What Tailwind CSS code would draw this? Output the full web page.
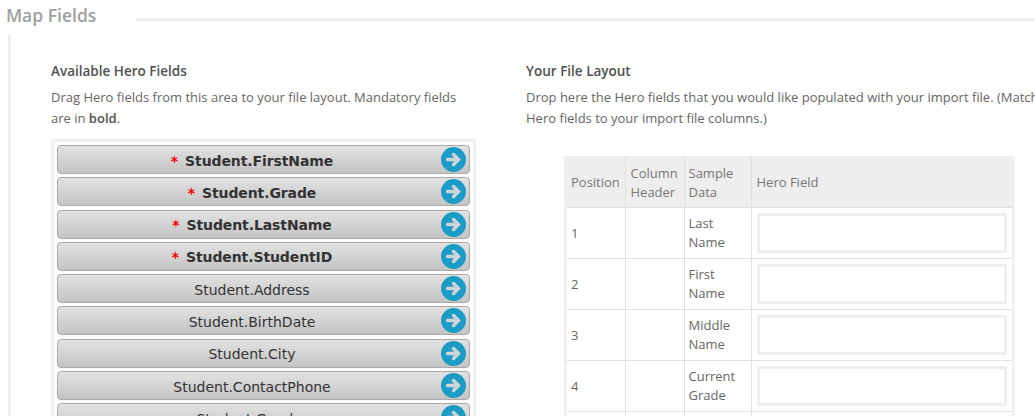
<!DOCTYPE html>
<html lang="en">
<head>
	<meta charset="UTF-8" />
	<title>Map Fields</title>
	<script src="https://cdn.jsdelivr.net/npm/@tailwindcss/browser@4"></script>
</head>
<body class="bg-white h-[416px] w-[1035px] overflow-hidden font-['Open_Sans',sans-serif] text-[13px] text-[#666]">
	<!-- Section title -->
	<div class="flex items-center h-[35px] pl-[6px]">
		<h2 class="text-[17.5px] font-semibold text-[#a0a0a0] leading-[32px] w-[130px] shrink-0 -mt-[5px]">Map Fields</h2>
		<div class="h-[3px] grow bg-[#eeeeee] mt-[4px]"></div>
	</div>

	<div class="ml-[8px] border-l-[3px] border-[#eeeeee] h-[381px] flex overflow-hidden">
		<!-- Available fields -->
		<div class="w-[515px] pl-[40px] pt-[26px] shrink-0">
			<h3 class="text-[13.5px] font-semibold text-[#505050] leading-[20px]">Available Hero Fields</h3>
			<p class="w-[420px] leading-[21px] mt-[6px]">Drag Hero fields from this area to your file layout. Mandatory fields are in <b class="font-semibold text-[#505050]">bold</b>.</p>
			<div class="mt-[10px] w-[425px] border-[3px] border-[#f1f1f1] px-[3px] pt-[3px] flex flex-col gap-[3.3px] font-['DejaVu_Sans',sans-serif] text-[14px] text-[#333]">
				<div class="relative h-[29px] pt-[3px] shrink-0 rounded-[4px] border border-[#aaaaaa] bg-gradient-to-b from-[#e2e2e2] to-[#c4c4c4] flex items-center justify-center pr-[23px] font-bold tracking-[-0.1px]"><span class="text-[#f00000] mr-[7px]">*</span>Student.FirstName
					<svg class="absolute right-[3px] top-[1px] w-[25px] h-[25px]" viewBox="0 0 25 25"><circle cx="12.5" cy="12.5" r="12.5" fill="#1a9cc6"/><path d="M6.5 12.5H17M12.5 7.5L17.5 12.5L12.5 17.5" fill="none" stroke="#cfd6da" stroke-width="3.4" stroke-linecap="round"/></svg>
				</div>
				<div class="relative h-[29px] pt-[3px] shrink-0 rounded-[4px] border border-[#aaaaaa] bg-gradient-to-b from-[#e2e2e2] to-[#c4c4c4] flex items-center justify-center pr-[23px] font-bold tracking-[-0.1px]"><span class="text-[#f00000] mr-[7px]">*</span>Student.Grade
					<svg class="absolute right-[3px] top-[1px] w-[25px] h-[25px]" viewBox="0 0 25 25"><circle cx="12.5" cy="12.5" r="12.5" fill="#1a9cc6"/><path d="M6.5 12.5H17M12.5 7.5L17.5 12.5L12.5 17.5" fill="none" stroke="#cfd6da" stroke-width="3.4" stroke-linecap="round"/></svg>
				</div>
				<div class="relative h-[29px] pt-[3px] shrink-0 rounded-[4px] border border-[#aaaaaa] bg-gradient-to-b from-[#e2e2e2] to-[#c4c4c4] flex items-center justify-center pr-[23px] font-bold tracking-[-0.1px]"><span class="text-[#f00000] mr-[7px]">*</span>Student.LastName
					<svg class="absolute right-[3px] top-[1px] w-[25px] h-[25px]" viewBox="0 0 25 25"><circle cx="12.5" cy="12.5" r="12.5" fill="#1a9cc6"/><path d="M6.5 12.5H17M12.5 7.5L17.5 12.5L12.5 17.5" fill="none" stroke="#cfd6da" stroke-width="3.4" stroke-linecap="round"/></svg>
				</div>
				<div class="relative h-[29px] pt-[3px] shrink-0 rounded-[4px] border border-[#aaaaaa] bg-gradient-to-b from-[#e2e2e2] to-[#c4c4c4] flex items-center justify-center pr-[23px] font-bold tracking-[-0.1px]"><span class="text-[#f00000] mr-[7px]">*</span>Student.StudentID
					<svg class="absolute right-[3px] top-[1px] w-[25px] h-[25px]" viewBox="0 0 25 25"><circle cx="12.5" cy="12.5" r="12.5" fill="#1a9cc6"/><path d="M6.5 12.5H17M12.5 7.5L17.5 12.5L12.5 17.5" fill="none" stroke="#cfd6da" stroke-width="3.4" stroke-linecap="round"/></svg>
				</div>
				<div class="relative h-[29px] pt-[3px] shrink-0 rounded-[4px] border border-[#aaaaaa] bg-gradient-to-b from-[#e2e2e2] to-[#c4c4c4] flex items-center justify-center pr-[23px]">Student.Address
					<svg class="absolute right-[3px] top-[1px] w-[25px] h-[25px]" viewBox="0 0 25 25"><circle cx="12.5" cy="12.5" r="12.5" fill="#1a9cc6"/><path d="M6.5 12.5H17M12.5 7.5L17.5 12.5L12.5 17.5" fill="none" stroke="#cfd6da" stroke-width="3.4" stroke-linecap="round"/></svg>
				</div>
				<div class="relative h-[29px] pt-[3px] shrink-0 rounded-[4px] border border-[#aaaaaa] bg-gradient-to-b from-[#e2e2e2] to-[#c4c4c4] flex items-center justify-center pr-[23px]">Student.BirthDate
					<svg class="absolute right-[3px] top-[1px] w-[25px] h-[25px]" viewBox="0 0 25 25"><circle cx="12.5" cy="12.5" r="12.5" fill="#1a9cc6"/><path d="M6.5 12.5H17M12.5 7.5L17.5 12.5L12.5 17.5" fill="none" stroke="#cfd6da" stroke-width="3.4" stroke-linecap="round"/></svg>
				</div>
				<div class="relative h-[29px] pt-[3px] shrink-0 rounded-[4px] border border-[#aaaaaa] bg-gradient-to-b from-[#e2e2e2] to-[#c4c4c4] flex items-center justify-center pr-[23px]">Student.City
					<svg class="absolute right-[3px] top-[1px] w-[25px] h-[25px]" viewBox="0 0 25 25"><circle cx="12.5" cy="12.5" r="12.5" fill="#1a9cc6"/><path d="M6.5 12.5H17M12.5 7.5L17.5 12.5L12.5 17.5" fill="none" stroke="#cfd6da" stroke-width="3.4" stroke-linecap="round"/></svg>
				</div>
				<div class="relative h-[29px] pt-[3px] shrink-0 rounded-[4px] border border-[#aaaaaa] bg-gradient-to-b from-[#e2e2e2] to-[#c4c4c4] flex items-center justify-center pr-[23px]">Student.ContactPhone
					<svg class="absolute right-[3px] top-[1px] w-[25px] h-[25px]" viewBox="0 0 25 25"><circle cx="12.5" cy="12.5" r="12.5" fill="#1a9cc6"/><path d="M6.5 12.5H17M12.5 7.5L17.5 12.5L12.5 17.5" fill="none" stroke="#cfd6da" stroke-width="3.4" stroke-linecap="round"/></svg>
				</div>
				<div class="relative h-[29px] pt-[3px] shrink-0 rounded-[4px] border border-[#aaaaaa] bg-gradient-to-b from-[#e2e2e2] to-[#c4c4c4] flex items-center justify-center pr-[23px]">Student.Gender
					<svg class="absolute right-[3px] top-[1px] w-[25px] h-[25px]" viewBox="0 0 25 25"><circle cx="12.5" cy="12.5" r="12.5" fill="#1a9cc6"/><path d="M6.5 12.5H17M12.5 7.5L17.5 12.5L12.5 17.5" fill="none" stroke="#cfd6da" stroke-width="3.4" stroke-linecap="round"/></svg>
				</div>
			</div>
		</div>

		<!-- File layout -->
		<div class="pt-[26px] shrink-0 w-[520px]">
			<h3 class="text-[13.5px] font-semibold text-[#505050] leading-[20px]">Your File Layout</h3>
			<p class="w-[515px] leading-[21px] mt-[6px]">Drop here the Hero fields that you would like populated with your import file. (Match Hero fields to your import file columns.)</p>
			<div class="mt-[27px] ml-[38px] w-[451px] border-x-[3px] border-[#f1f1f1]">
				<table class="w-full table-fixed border-collapse text-[13px]">
					<thead class="bg-[#eeeeee] text-[#777]">
						<tr class="h-[51px] leading-[19px] text-left">
							<th class="w-[58px] font-normal pl-[4px] pt-[3px]">Position</th>
							<th class="w-[59px] font-normal pl-[5px] pt-[3px] border-l border-[#e0e0e0]">Column Header</th>
							<th class="w-[67px] font-normal pl-[4px] pt-[3px] border-l border-[#e0e0e0]">Sample Data</th>
							<th class="font-normal pl-[5px] pt-[3px] border-l border-[#e0e0e0]">Hero Field</th>
						</tr>
					</thead>
					<tbody>
						<tr class="h-[51px] leading-[19px] border-t border-[#e0e0e0]">
							<td class="pl-[4px] pt-[2px]">1</td>
							<td class="border-l border-[#e0e0e0]"></td>
							<td class="pl-[4px] pr-[4px] border-l border-[#e0e0e0]">Last Name</td>
							<td class="pl-[5px] pr-[5px] border-l border-[#e0e0e0]"><div class="h-[40px] border-[3px] border-[#eeeeee]"></div></td>
						</tr>
						<tr class="h-[51px] leading-[19px] border-t border-[#e0e0e0]">
							<td class="pl-[4px] pt-[2px]">2</td>
							<td class="border-l border-[#e0e0e0]"></td>
							<td class="pl-[4px] pr-[4px] border-l border-[#e0e0e0]">First Name</td>
							<td class="pl-[5px] pr-[5px] border-l border-[#e0e0e0]"><div class="h-[40px] border-[3px] border-[#eeeeee]"></div></td>
						</tr>
						<tr class="h-[51px] leading-[19px] border-t border-[#e0e0e0]">
							<td class="pl-[4px] pt-[2px]">3</td>
							<td class="border-l border-[#e0e0e0]"></td>
							<td class="pl-[4px] pr-[4px] border-l border-[#e0e0e0]">Middle Name</td>
							<td class="pl-[5px] pr-[5px] border-l border-[#e0e0e0]"><div class="h-[40px] border-[3px] border-[#eeeeee]"></div></td>
						</tr>
						<tr class="h-[51px] leading-[19px] border-t border-[#e0e0e0]">
							<td class="pl-[4px] pt-[2px]">4</td>
							<td class="border-l border-[#e0e0e0]"></td>
							<td class="pl-[4px] pr-[4px] border-l border-[#e0e0e0]">Current Grade</td>
							<td class="pl-[5px] pr-[5px] border-l border-[#e0e0e0]"><div class="h-[40px] border-[3px] border-[#eeeeee]"></div></td>
						</tr>
						<tr class="h-[51px] border-t border-[#e0e0e0]">
							<td></td>
							<td class="border-l border-[#e0e0e0]"></td>
							<td class="border-l border-[#e0e0e0]"></td>
							<td class="border-l border-[#e0e0e0]"></td>
						</tr>
					</tbody>
				</table>
			</div>
		</div>
	</div>
</body>
</html>
